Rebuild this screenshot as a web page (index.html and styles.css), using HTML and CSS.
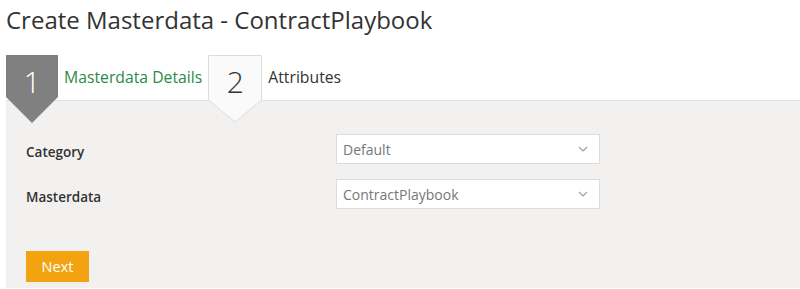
FILE: index.html
```html
<!DOCTYPE html>
<html>
<head>
  <meta charset="UTF-8">
  <title>Create Masterdata</title>
  <link rel="stylesheet" href="styles.css">
</head>
<body>

<h1 class="title">Create Masterdata - ContractPlaybook</h1>

<div class="steps">
  <div class="step step-active">
    <svg class="step-shape" viewBox="0 0 52 68" width="52" height="68">
      <polygon points="0,0 52,0 52,42 26,68 0,42" fill="#808080"/>
    </svg>
    <span class="step-num">1</span>
  </div>
  <span class="step-label step-label-active">Masterdata Details</span>
  <div class="step">
    <svg class="step-shape" viewBox="0 0 54 68" width="54" height="68">
      <polygon points="0.5,0.5 53.5,0.5 53.5,45 27,67 0.5,45" fill="#fafafa" stroke="#dcdcdc" stroke-width="1"/>
    </svg>
    <span class="step-num">2</span>
  </div>
  <span class="step-label">Attributes</span>
</div>

<div class="panel">
  <div class="form-row">
    <label class="form-label">Category</label>
    <div class="select">
      <span>Default</span>
      <svg class="chevron" viewBox="0 0 10 6" width="10" height="6"><polyline points="1,1 5,5 9,1" fill="none" stroke="#a0a0a0" stroke-width="1.2"/></svg>
    </div>
  </div>
  <div class="form-row">
    <label class="form-label">Masterdata</label>
    <div class="select">
      <span>ContractPlaybook</span>
      <svg class="chevron" viewBox="0 0 10 6" width="10" height="6"><polyline points="1,1 5,5 9,1" fill="none" stroke="#a0a0a0" stroke-width="1.2"/></svg>
    </div>
  </div>
  <button class="btn-next">Next</button>
</div>

</body>
</html>
```

FILE: styles.css
```css
body {
  margin: 0;
  font-family: "Open Sans", "Noto Sans", sans-serif;
  background: #fff;
  color: #333;
}

.title {
  margin: 0;
  padding: 3px 0 0 6px;
  height: 52px;
  font-size: 24px;
  font-weight: 400;
  color: #333;
}

.steps {
  display: flex;
  align-items: flex-start;
  gap: 6px;
  height: 45px;
  padding-left: 6px;
}

.step {
  position: relative;
  z-index: 1;
  width: 52px;
  height: 68px;
  flex: none;
}

.step + .step-label + .step {
  width: 54px;
}

.step-shape {
  position: absolute;
  top: 0;
  left: 0;
}

.step-num {
  position: relative;
  display: block;
  text-align: center;
  font-size: 30px;
  font-weight: 300;
  line-height: 54px;
  color: #333;
}

.step-active .step-num {
  color: #fff;
}

.step-label {
  font-size: 15.75px;
  line-height: 44px;
  color: #333;
}

.step-label-active {
  color: #2a8a4a;
}

.panel {
  margin-left: 6px;
  border-top: 1px solid #e2e2e2;
  background: #f2f1f0;
  padding: 33px 20px 6px 20px;
  height: 148px;
}

.form-row {
  display: flex;
  align-items: center;
  margin-bottom: 15px;
}

.form-label {
  width: 310px;
  padding-top: 5px;
  font-size: 13.5px;
  font-weight: 600;
  color: #333;
}

.select {
  display: flex;
  align-items: center;
  justify-content: space-between;
  box-sizing: border-box;
  width: 264px;
  height: 30px;
  padding: 0 11px 0 6px;
  background: #fff;
  border: 1px solid #dcdcdc;
  font-size: 14px;
  color: #777;
}

.btn-next {
  margin-top: 27px;
  width: 63px;
  height: 31px;
  border: none;
  background: #f2a30f;
  color: #fff;
  font-family: inherit;
  font-size: 14.5px;
  padding: 0;
}
```
